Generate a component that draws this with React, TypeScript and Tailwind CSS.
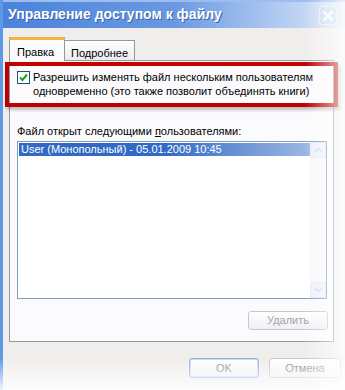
import React from 'react'

function XpButton({ label, primary = false, disabled = false, className = '' }: { label: string; primary?: boolean; disabled?: boolean; className?: string }) {
  return (
    <div
      className={`flex items-center justify-center rounded-[3px] border bg-gradient-to-b from-white to-[#eef0f4] text-[11px] ${
        primary ? 'border-[#8fb0e4] shadow-[inset_0_0_0_1px_#c9d9f3]' : 'border-[#c3c7cf]'
      } ${disabled ? 'text-[#a4a4a4]' : 'text-[#8a8a8a]'} ${className}`}
    >
      {label}
    </div>
  )
}

export default function App() {
  return (
    <div className="relative h-[390px] w-[345px] overflow-hidden bg-white font-['Liberation_Sans',Arial,sans-serif] text-[11px] text-black">
      <div className="flex h-full flex-col border-l-[3px] border-[#5d9ae6] bg-[#f0eeed]">
        {/* title bar */}
        <div className="relative flex h-[28px] items-center bg-gradient-to-r from-[#4a83dc] via-[#6a99e2] to-[#dfe9f8] pl-[5px]">
          <div className="absolute inset-x-0 top-0 h-[2px] bg-[#9dbdf0]" />
          <span className="pt-[1px] text-[14px] font-bold text-white [text-shadow:1px_1px_0_#3a63a8]">
            Управление доступом к файлу
          </span>
          <div className="absolute left-[316px] top-[6px] flex h-[19px] w-[18px] items-center justify-center rounded-[3px] border border-[#e6edf8] bg-[#c9daf2]/60">
            <svg width="10" height="10" viewBox="0 0 10 10">
              <path d="M1 1 L9 9 M9 1 L1 9" stroke="white" strokeWidth="2" strokeLinecap="square" />
            </svg>
          </div>
        </div>

        {/* body */}
        <div className="flex flex-col pl-[6px] pt-[9px]">
          {/* tabs */}
          <div className="relative z-10 flex items-end">
            <div className="relative -mb-px h-[24px] w-[56px] border border-b-0 border-[#919b9c] bg-[#fbfbfd] pl-[7px] pt-[6px]">
              <div className="absolute inset-x-[-1px] top-[-1px] h-[3px] rounded-t-[2px] bg-[#f3b33d]" />
              Правка
            </div>
            <div className="h-[20px] w-[70px] border border-b-0 border-l-0 border-[#919b9c] bg-gradient-to-b from-white to-[#ececf0] pl-[6px] pt-[4px]">
              Подробнее
            </div>
          </div>

          {/* panel */}
          <div className="flex h-[282px] w-[325px] flex-col border border-[#919b9c] bg-[#fbfbfd] pl-[7px]">
            <div className="mt-[10px] flex items-start">
              <div className="flex h-[13px] w-[13px] shrink-0 items-center justify-center border border-[#1c5180] bg-white">
                <svg width="9" height="9" viewBox="0 0 9 9">
                  <path d="M1 4.5 L3.5 7 L8 1.5" fill="none" stroke="#21a121" strokeWidth="2" />
                </svg>
              </div>
              <div className="ml-[3px] -mt-[1px] leading-[14px]">
                Разрешить изменять файл нескольким пользователям
                <br />
                одновременно (это также позволит объединять книги)
              </div>
            </div>

            <div className="mt-[27px] leading-[13px]">
              Файл открыт следующими <span className="underline">п</span>ользователями:
            </div>

            <div className="mt-[3px] flex h-[158px] w-[310px] border border-[#7f9db9] bg-white">
              <div className="flex-1 pl-[1px] pt-[1px]">
                <div className="flex h-[13px] items-center bg-gradient-to-r from-[#316ac5] via-[#316ac5] to-[#9fb8e3] pl-[2px] text-white">
                  User (Монопольный) - 05.01.2009 10:45
                </div>
              </div>
              <div className="flex w-[16px] flex-col justify-between bg-[#f7f8fb]">
                <div className="flex h-[16px] items-center justify-center rounded-[2px] border border-[#e2e8f3] bg-[#eef2fa]">
                  <svg width="7" height="4" viewBox="0 0 7 4">
                    <path d="M0.5 3.5 L3.5 0.5 L6.5 3.5" fill="none" stroke="#c5d2e8" strokeWidth="1.2" />
                  </svg>
                </div>
                <div className="flex h-[16px] items-center justify-center rounded-[2px] border border-[#e2e8f3] bg-[#eef2fa]">
                  <svg width="7" height="4" viewBox="0 0 7 4">
                    <path d="M0.5 0.5 L3.5 3.5 L6.5 0.5" fill="none" stroke="#c5d2e8" strokeWidth="1.2" />
                  </svg>
                </div>
              </div>
            </div>

            <div className="mt-[12px] flex w-[311px] justify-end">
              <XpButton label="Удалить" disabled className="h-[19px] w-[80px]" />
            </div>
          </div>

          {/* dialog buttons */}
          <div className="mt-[16px] flex w-[332px] justify-end gap-[10px]">
            <XpButton label="OK" primary className="h-[20px] w-[70px]" />
            <XpButton label="Отмена" className="h-[20px] w-[72px]" />
          </div>
        </div>
      </div>

      {/* annotation box */}
      <div className="pointer-events-none absolute left-[5px] top-[62px] h-[45px] w-[333px] border-[4px] border-[#c00000] shadow-[2px_3px_3px_rgba(0,0,0,0.25)]" />

      {/* fades */}
      <div className="pointer-events-none absolute inset-y-0 right-0 w-[40px] bg-gradient-to-r from-white/0 to-white/75" />
      <div className="pointer-events-none absolute inset-x-0 bottom-0 h-[32px] bg-gradient-to-b from-white/0 to-white/90" />
    </div>
  )
}
